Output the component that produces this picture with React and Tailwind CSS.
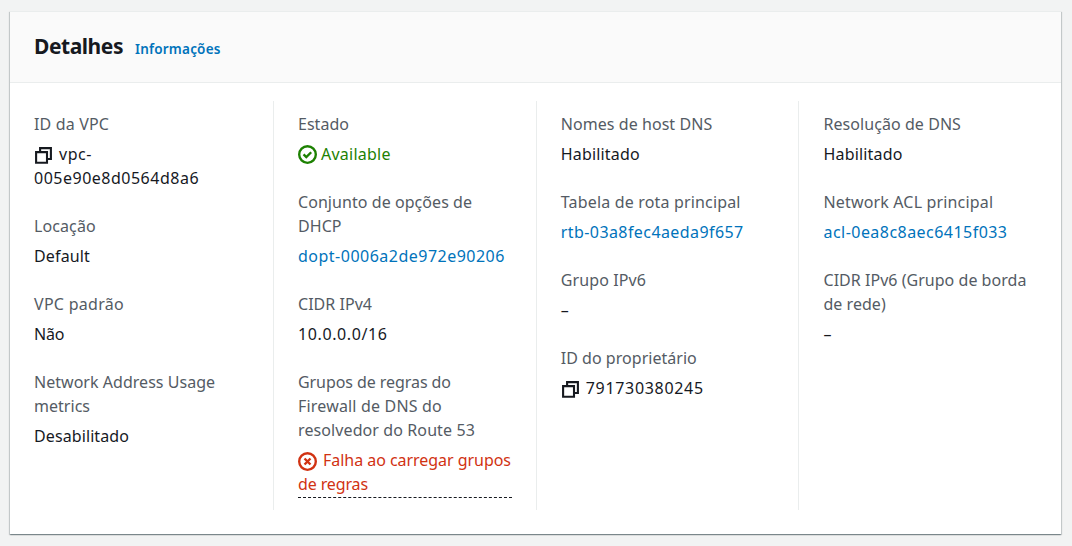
function CopyIcon() {
  return (
    <svg viewBox="0 0 18 18" className="inline-block size-[18px] mt-[-1px] align-[-4px]" fill="none" stroke="#16191f" strokeWidth="2.1">
      <path d="M6.1 5.5V2.1h10.8v10.9h-3.4" />
      <path d="M2.1 6.1h10.9v10.6H2.1z" />
    </svg>
  );
}

function SuccessIcon() {
  return (
    <svg viewBox="0 0 16 16" className="relative top-[0.5px] inline-block size-[19px] shrink-0" fill="none" stroke="#1d8102" strokeWidth="2">
      <circle cx="8" cy="8" r="7" />
      <path d="M4.7 7.9l2.3 2.3 4.1-4.1" />
    </svg>
  );
}

function ErrorIcon() {
  return (
    <svg viewBox="0 0 16 16" className="inline-block size-[19px] align-[-5px]" fill="none" stroke="#d13212" strokeWidth="2">
      <circle cx="8" cy="8" r="7" />
      <path d="M10.5 5.5l-5 5M5.5 5.5l5 5" />
    </svg>
  );
}

function Field({ label, children, tracking = "tracking-[0.1px]" }) {
  return (
    <div className="flex flex-col gap-1.5">
      <div className={`text-[#545b64] whitespace-pre-line ${tracking}`}>{label}</div>
      <div>{children}</div>
    </div>
  );
}

function Link({ children, className = "" }) {
  return <a href="#" className={`text-[#0073bb] block whitespace-nowrap ${className}`}>{children}</a>;
}

function Column({ children, first = false }) {
  return (
    <div className={`flex flex-col gap-6 pt-[11px] pr-[23px] border-l ${first ? "border-transparent pl-[23px]" : "border-[#eaeded] pl-[24.25px]"}`}>
      {children}
    </div>
  );
}

export default function App() {
  return (
    <div className="h-[546px] overflow-hidden bg-[#f2f3f3] pt-[11px] px-[10px] font-['Noto_Sans','Open_Sans',sans-serif] text-[16px] leading-[24px] text-[#16191f]">
      <section className="flex h-[523px] w-[1051px] flex-col border-t border-[#eaeded] bg-white shadow-[0_1px_1px_0_rgba(0,28,36,0.3),1px_1px_1px_0_rgba(0,28,36,0.15),-1px_1px_1px_0_rgba(0,28,36,0.15)]">
        <header className="flex h-[71px] shrink-0 items-baseline gap-3 border-b border-[#eaeded] bg-[#fafafa] px-6 pt-5">
          <h2 className="text-[21px] leading-[29px] font-bold tracking-[-0.45px]">Detalhes</h2>
          <a href="#" className="text-[13.5px] font-semibold tracking-[0.21px] text-[#0073bb]">Informações</a>
        </header>
        <div className="mt-[18px] grid h-[409px] grid-cols-4">
          <Column first>
            <Field label="ID da VPC" tracking="tracking-[0.15px]">
              <CopyIcon />
              <span className="ml-[7px] tracking-[0.5px]">vpc-<br />005e90e8d0564d8a6</span>
            </Field>
            <Field label="Locação"><span className="tracking-[0.15px]">Default</span></Field>
            <Field label="VPC padrão" tracking="tracking-[0.28px]"><span className="tracking-[-0.2px]">Não</span></Field>
            <Field label={"Network Address Usage\nmetrics"} tracking="tracking-[0.03px]"><span className="tracking-[0.1px]">Desabilitado</span></Field>
          </Column>
          <Column>
            <Field label="Estado" tracking="tracking-[0.03px]">
              <div className="flex items-center gap-1 text-[#1d8102]">
                <SuccessIcon />
                <span className="tracking-[0.24px]">Available</span>
              </div>
            </Field>
            <Field label={"Conjunto de opções de\nDHCP"} tracking="tracking-[0.06px]"><Link className="tracking-[0.49px]">dopt-0006a2de972e90206</Link></Field>
            <Field label="CIDR IPv4" tracking="tracking-[0.03px]"><span className="tracking-[0.6px]">10.0.0.0/16</span></Field>
            <Field label={<><span className="tracking-[-0.07px]">Grupos de regras do</span><br /><span className="tracking-[0.18px]">Firewall de DNS do</span><br />resolvedor do Route 53</>}>
              <div className="w-[214px] border-b border-dashed border-[#16191f] pb-px text-[#d13212]">
                <div className="whitespace-nowrap tracking-[-0.04px]"><ErrorIcon /><span className="ml-[6px]">Falha ao carregar grupos</span></div>
                <div className="tracking-[-0.12px]">de regras</div>
              </div>
            </Field>
          </Column>
          <Column>
            <Field label="Nomes de host DNS" tracking="tracking-[0.06px]"><span className="tracking-[0.17px]">Habilitado</span></Field>
            <Field label="Tabela de rota principal" tracking="tracking-[0.17px]"><Link className="tracking-[0.42px]">rtb-03a8fec4aeda9f657</Link></Field>
            <Field label="Grupo IPv6">–</Field>
            <Field label="ID do proprietário" tracking="tracking-[0.03px]">
              <CopyIcon />
              <span className="ml-[7px] tracking-[0.68px]">791730380245</span>
            </Field>
          </Column>
          <Column>
            <Field label="Resolução de DNS" tracking="tracking-[0.06px]"><span className="tracking-[0.17px]">Habilitado</span></Field>
            <Field label="Network ACL principal" tracking="tracking-[0.16px]"><Link className="tracking-[0.46px]">acl-0ea8c8aec6415f033</Link></Field>
            <Field label={"CIDR IPv6 (Grupo de borda\nde rede)"} tracking="tracking-[0.03px]">–</Field>
          </Column>
        </div>
      </section>
    </div>
  );
}
